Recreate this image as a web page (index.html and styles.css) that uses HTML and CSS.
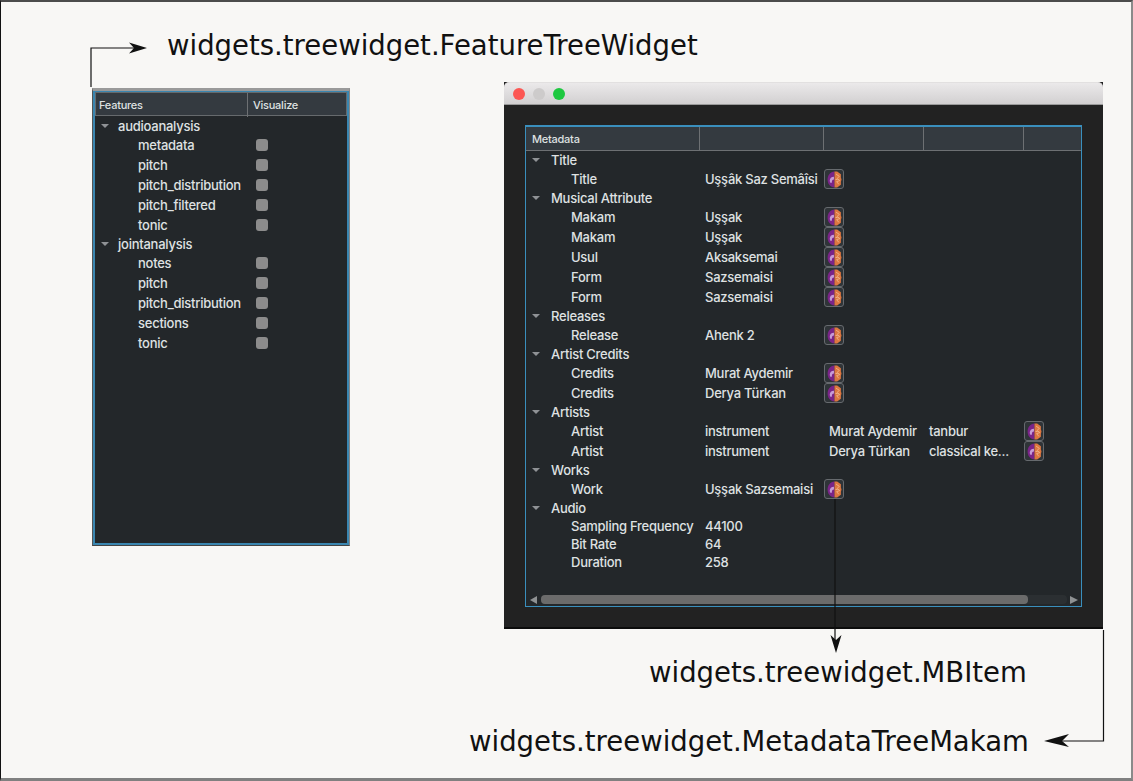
FILE: index.html
```html
<!DOCTYPE html>
<html lang="en">
<head>
<meta charset="utf-8">
<title>Tree widgets</title>
<link rel="stylesheet" href="styles.css">
</head>
<body>
<svg class="defs" width="0" height="0" aria-hidden="true">
  <symbol id="brain" viewBox="0 0 14 16">
    <path d="M7 0.5C3 0.5 0.5 4 0.5 8s2.5 7.5 6.5 7.5z" fill="#7a2488"/>
    <path d="M7 0.5h2.5L13 3v3l0.6 2-0.6 2v3l-3.5 2.500H7z" fill="#dd7740"/>
    <path d="M2.500 9.500C2.500 6.500 4 5.500 6.500 5.300V8C5 8 4.500 9 4.500 11H3z" fill="#c79bd6"/>
    <path d="M8.500 3l3 2-2 2 2.500 2-3 1 2 2.500M8 8h2" fill="none" stroke="#f2b78c" stroke-width=".8"/>
  </symbol>
</svg>
<main class="canvas">
  <h2 class="label label-feature">widgets.treewidget.FeatureTreeWidget</h2>
  <h2 class="label label-item">widgets.treewidget.MBItem</h2>
  <h2 class="label label-makam">widgets.treewidget.MetadataTreeMakam</h2>

  <section class="feature-shell">
    <div class="tree feature-tree">
      <div class="head"><span class="hcell">Features</span><span class="hcell">Visualize</span></div>
      <div class="row group"><i class="caret"></i><span>audioanalysis</span></div>
      <div class="row child"><span>metadata</span><b class="check"></b></div>
      <div class="row child"><span>pitch</span><b class="check"></b></div>
      <div class="row child"><span>pitch_distribution</span><b class="check"></b></div>
      <div class="row child"><span>pitch_filtered</span><b class="check"></b></div>
      <div class="row child"><span>tonic</span><b class="check"></b></div>
      <div class="row group"><i class="caret"></i><span>jointanalysis</span></div>
      <div class="row child"><span>notes</span><b class="check"></b></div>
      <div class="row child"><span>pitch</span><b class="check"></b></div>
      <div class="row child"><span>pitch_distribution</span><b class="check"></b></div>
      <div class="row child"><span>sections</span><b class="check"></b></div>
      <div class="row child"><span>tonic</span><b class="check"></b></div>
    </div>
  </section>

  <section class="window">
    <header class="titlebar">
      <i class="light red"></i><i class="light grey"></i><i class="light green"></i>
    </header>
    <div class="window-body">
      <div class="tree meta-tree">
        <div class="head"><span class="hcell">Metadata</span><span class="hcell"></span><span class="hcell"></span><span class="hcell"></span><span class="hcell"></span></div>
        <div class="rows">
          <div class="row group"><i class="caret"></i><span>Title</span></div>
          <div class="row child"><span>Title</span><span>Uşşâk Saz Semâîsi</span><button class="mb"><svg><use href="#brain"/></svg></button></div>
          <div class="row group"><i class="caret"></i><span>Musical Attribute</span></div>
          <div class="row child"><span>Makam</span><span>Uşşak</span><button class="mb"><svg><use href="#brain"/></svg></button></div>
          <div class="row child"><span>Makam</span><span>Uşşak</span><button class="mb"><svg><use href="#brain"/></svg></button></div>
          <div class="row child"><span>Usul</span><span>Aksaksemai</span><button class="mb"><svg><use href="#brain"/></svg></button></div>
          <div class="row child"><span>Form</span><span>Sazsemaisi</span><button class="mb"><svg><use href="#brain"/></svg></button></div>
          <div class="row child"><span>Form</span><span>Sazsemaisi</span><button class="mb"><svg><use href="#brain"/></svg></button></div>
          <div class="row group"><i class="caret"></i><span>Releases</span></div>
          <div class="row child"><span>Release</span><span>Ahenk 2</span><button class="mb"><svg><use href="#brain"/></svg></button></div>
          <div class="row group"><i class="caret"></i><span>Artist Credits</span></div>
          <div class="row child"><span>Credits</span><span>Murat Aydemir</span><button class="mb"><svg><use href="#brain"/></svg></button></div>
          <div class="row child"><span>Credits</span><span>Derya Türkan</span><button class="mb"><svg><use href="#brain"/></svg></button></div>
          <div class="row group"><i class="caret"></i><span>Artists</span></div>
          <div class="row child artist"><span>Artist</span><span>instrument</span><span>Murat Aydemir</span><span>tanbur</span><button class="mb"><svg><use href="#brain"/></svg></button></div>
          <div class="row child artist"><span>Artist</span><span>instrument</span><span>Derya Türkan</span><span>classical ke...</span><button class="mb"><svg><use href="#brain"/></svg></button></div>
          <div class="row group"><i class="caret"></i><span>Works</span></div>
          <div class="row child"><span>Work</span><span>Uşşak Sazsemaisi</span><button class="mb"><svg><use href="#brain"/></svg></button></div>
          <div class="row group"><i class="caret"></i><span>Audio</span></div>
          <div class="row child plain"><span>Sampling Frequency</span><span>44100</span></div>
          <div class="row child plain"><span>Bit Rate</span><span>64</span></div>
          <div class="row child plain"><span>Duration</span><span>258</span></div>
        </div>
        <div class="scrollbar">
          <i class="arrow-left"></i>
          <div class="track"><div class="thumb"></div></div>
          <i class="arrow-right"></i>
        </div>
      </div>
    </div>
  </section>

  <svg class="arrows" width="1133" height="781" viewBox="0 0 1133 781" aria-hidden="true">
    <path d="M91 87V48H134M835 499V640M1103.500 630V741H1060" fill="none" stroke="#111" stroke-width="1.200"/>
    <path d="M147 48L129 42.500L134 48L129 53.500z" fill="#111"/>
    <path d="M836 653L830.500 635L836 640L841.500 635z" fill="#111"/>
    <path d="M1044 741L1069 734L1062 741L1069 747z" fill="#111"/>
  </svg>
</main>
</body>
</html>
```
FILE: styles.css
```css
* { box-sizing: border-box; }
html, body { margin: 0; padding: 0; }
body { width: 1133px; height: 781px; overflow: hidden; background: #f8f7f5; }
.defs { position: absolute; }
.canvas {
  position: relative;
  width: 1133px;
  height: 781px;
  background: #f8f7f5;
  border-top: 2px solid #4c4c4c;
  border-left: 1px solid #111;
  border-right: 2px solid #8a8a8a;
  border-bottom: 3px solid #808080;
}
.arrows { position: absolute; left: -1px; top: -2px; pointer-events: none; }

.label {
  position: absolute;
  margin: 0;
  font: 400 27.5px/34px "DejaVu Sans", sans-serif;
  color: #111;
  white-space: nowrap;
}
.label-feature { left: 166px; top: 26px; }
.label-item { left: 648px; top: 653px; }
.label-makam { left: 468px; top: 722px; }

.feature-shell {
  position: absolute;
  left: 91px;
  top: 86px;
  width: 258px;
  height: 458px;
  background: #23272a;
  border-top: 3px solid #9a9a9a;
  border-left: 1px solid #555;
  border-right: 1px solid #888;
  border-bottom: 1px solid #444;
}
.tree {
  font: 500 13px/18px "Inter", "Liberation Sans", sans-serif;
  letter-spacing: -0.25px;
  color: #dfe1e2;
  background: #23272a;
}
.feature-tree {
  height: 100%;
  border: 2px solid #3a86b0;
  border-top-width: 1px;
}
.head {
  display: grid;
  height: 24px;
  background: #343a40;
  border: 1px solid #666a6d;
  border-top-width: 1px;
  font-size: 11px;
  line-height: 24px;
}
.hcell { padding-left: 5px; border-left: 1px solid #6d7073; white-space: nowrap; }
.hcell:first-child { border-left: 0; }
.feature-tree .hcell:first-child { padding-left: 3px; }
.feature-tree .head { grid-template-columns: 151px 1fr; }
.row { display: flex; align-items: center; white-space: nowrap; }
.group { height: 18px; padding-left: 6px; }
.child { height: 20px; }
.caret {
  width: 0;
  height: 0;
  margin-right: 11px;
  border-left: 4px solid transparent;
  border-right: 4px solid transparent;
  border-top: 4px solid #8f9295;
}
.feature-tree .head + .group { margin-top: 1px; }
.feature-tree .child { display: grid; grid-template-columns: 116px 1fr; padding-left: 43px; }
.check {
  display: block;
  width: 12px;
  height: 12px;
  margin-left: 2px;
  border-radius: 3px;
  background: #8c8c8c;
}
.feature-tree .group { padding-left: 6px; }
.feature-tree .group .caret { margin-right: 9px; }

.window {
  position: absolute;
  left: 503px;
  top: 80px;
  width: 599px;
  height: 547px;
  background: #222222;
  border-bottom: 2px solid #0c0c0c;
  display: flex;
  flex-direction: column;
}
.titlebar {
  flex: none;
  height: 23px;
  display: flex;
  align-items: center;
  gap: 8px;
  padding-left: 9px;
  border-radius: 5px 5px 0 0;
  border-top: 1px solid #e2e0e0;
  border-bottom: 1px solid #9a9a9a;
  background: linear-gradient(#ebe9ea, #d2d0d1);
}
.light { width: 12px; height: 12px; border-radius: 50%; }
.red { background: #fc5753; }
.grey { background: #cdcbcb; }
.green { background: #1ec840; }
.window-body { flex: 1; padding: 20px 21px 21px 21px; }
.meta-tree {
  height: 482px;
  display: flex;
  flex-direction: column;
  border: 1px solid #3a8fbd;
  border-top: 2px solid #3a8fbd;
}
.meta-tree .head { grid-template-columns: 173px 124px 100px 100px 1fr; border-left: 0; border-right: 0; border-top: 0; border-bottom: 1px solid #6d7073; height: 24px; }
.meta-tree .hcell:first-child { padding-left: 6px; }
.rows { flex: 1; }
.meta-tree .group { height: 18px; padding-left: 6px; }
.meta-tree .child {
  display: grid;
  grid-template-columns: 134px 119px 20px;
  padding-left: 45px;
  align-items: center;
}
.meta-tree .artist { grid-template-columns: 134px 124px 100px 95px 20px; }
.meta-tree .plain { height: 18px; grid-template-columns: 134px 100px; }
.mb {
  display: flex;
  align-items: center;
  justify-content: center;
  width: 20px;
  height: 20px;
  padding: 0;
  background: #2f3438;
  border: 1px solid #666a6e;
  border-radius: 3px;
}
.mb svg { width: 15px; height: 17px; display: block; }
.scrollbar {
  flex: none;
  height: 9px;
  margin-bottom: 2px;
  display: flex;
  align-items: center;
  padding: 0 3px 0 4px;
}
.arrow-left, .arrow-right { width: 0; height: 0; border-top: 4px solid transparent; border-bottom: 4px solid transparent; }
.arrow-left { border-right: 7px solid #8e9193; margin-right: 4px; }
.arrow-right { border-left: 8px solid #8e9193; margin-left: 3px; }
.track { flex: 1; height: 9px; background: #2b2f32; border-radius: 4px; }
.thumb { width: 487px; height: 9px; background: #6b6b6b; border-radius: 4px; }
```
